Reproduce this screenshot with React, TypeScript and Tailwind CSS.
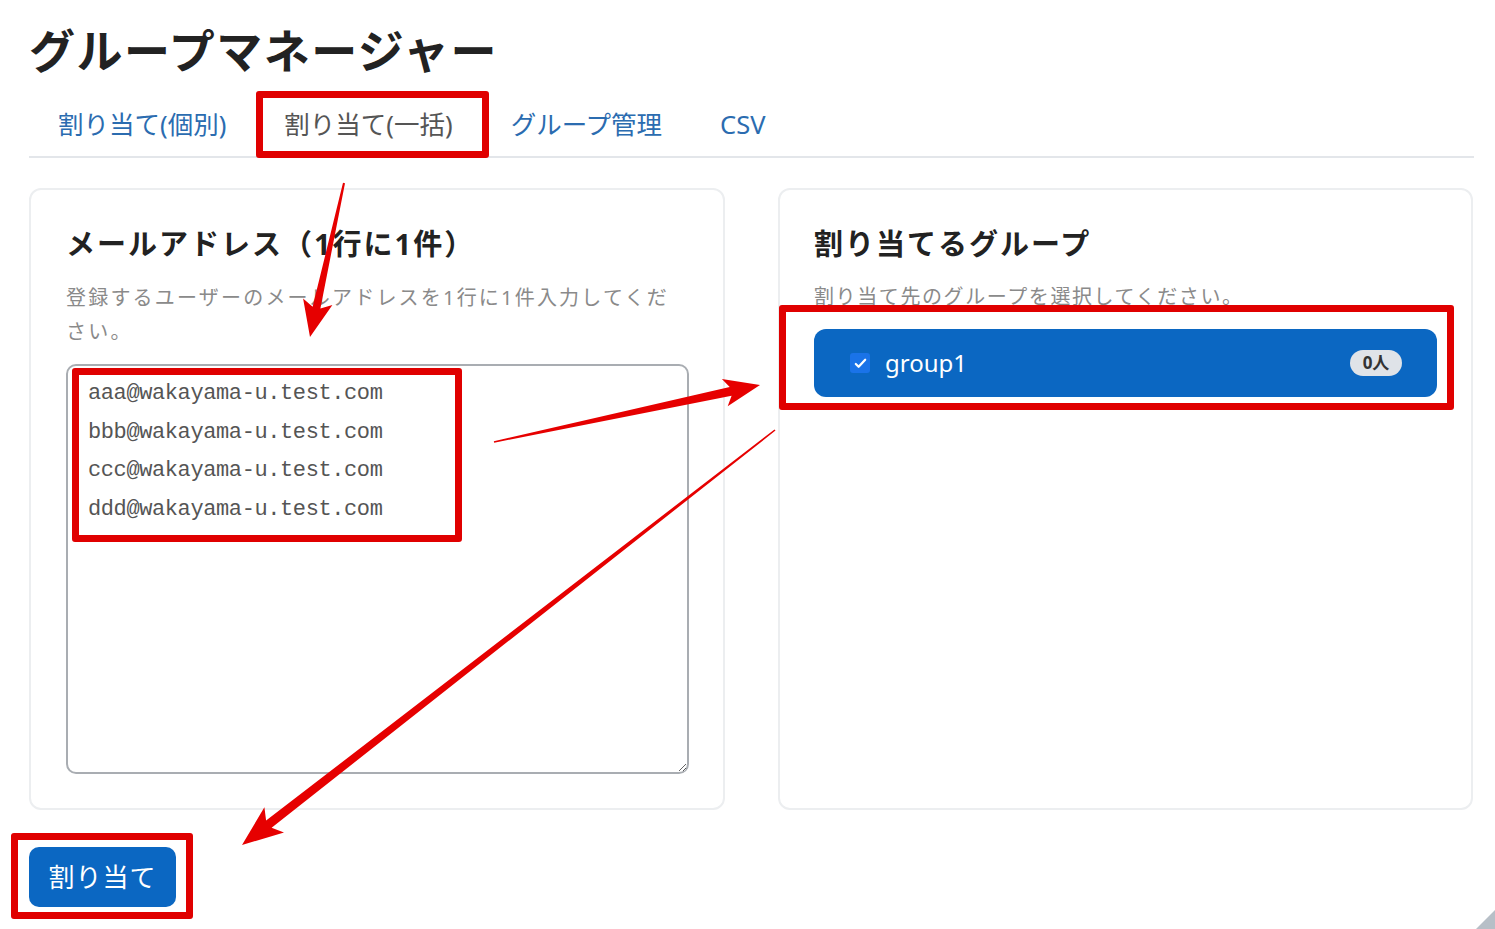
import React from "react"

type Pt = [number, number]

// tapered callout arrow: thin tail, thick shaft end, swept-back head
function arrowPoints(s: Pt, t: Pt, w0: number, w1: number, hl: number, hw: number) {
  const dx = t[0] - s[0]
  const dy = t[1] - s[1]
  const len = Math.hypot(dx, dy)
  const d: Pt = [dx / len, dy / len]
  const n: Pt = [-d[1], d[0]]
  const b: Pt = [t[0] - d[0] * hl, t[1] - d[1] * hl]
  const barb: Pt = [t[0] - d[0] * hl * 1.2, t[1] - d[1] * hl * 1.2]
  const p = (base: Pt, k: number): string =>
    `${(base[0] + n[0] * k).toFixed(1)},${(base[1] + n[1] * k).toFixed(1)}`
  return [
    p(s, w0 / 2),
    p(b, w1 / 2),
    p(barb, hw),
    `${t[0]},${t[1]}`,
    p(barb, -hw),
    p(b, -w1 / 2),
    p(s, -w0 / 2),
  ].join(" ")
}

const emails = [
  "aaa@wakayama-u.test.com",
  "bbb@wakayama-u.test.com",
  "ccc@wakayama-u.test.com",
  "ddd@wakayama-u.test.com",
].join("\n")

const tabs = ["割り当て(個別)", "割り当て(一括)", "グループ管理", "CSV"]

export default function App() {
  return (
    <div
      className="relative h-[929px] w-[1495px] overflow-hidden bg-white"
      style={{ fontFamily: '"Noto Sans", "Noto Sans CJK JP", sans-serif' }}
    >
      <div className="pl-[29px] pr-[21px] pt-[20px]">
        <h1 className="text-[46px] font-bold leading-[60px] tracking-[1.5px] text-[#222]">
          グループマネージャー
        </h1>

        {/* tabs */}
        <div className="mt-[12px] flex border-b-2 border-[#e3e6ea]">
          {tabs.map((tab, i) => (
            <div
              key={tab}
              className={
                i === 1
                  ? "px-[29px] py-[13px] text-[25.5px] leading-[38px] text-[#555]"
                  : "px-[29px] py-[13px] text-[25.5px] leading-[38px] text-[#2b6cb0]"
              }
            >
              {tab}
            </div>
          ))}
        </div>

        <div className="mt-[30px] flex gap-[53px]">
          {/* email input card */}
          <div className="flex h-[622px] w-[696px] flex-col rounded-[12px] border-2 border-[#eceef0] pb-[34px] pl-[35px] pr-[34px] pt-[33px]">
            <h2 className="text-[29px] font-bold leading-[42px] tracking-[2px] text-[#222]">
              メールアドレス（1行に1件）
            </h2>
            <p className="mt-[16px] text-[20px] leading-[34px] tracking-[2.2px] text-[#8a8a8a]">
              登録するユーザーのメールアドレスを1行に1件入力してください。
            </p>
            <textarea
              defaultValue={emails}
              className="mt-[15px] flex-1 resize rounded-[10px] border-2 border-[#a9adb2] pl-[20px] pt-[9px] text-[22px] leading-[38.5px] tracking-[-0.4px] text-[#555] outline-none"
              style={{ fontFamily: '"Liberation Mono", "Noto Sans CJK JP", monospace' }}
            />
          </div>

          {/* group select card */}
          <div className="h-[622px] w-[695px] rounded-[12px] border-2 border-[#eceef0] pl-[34px] pr-[34px] pt-[33px]">
            <h2 className="text-[29px] font-bold leading-[42px] tracking-[2px] text-[#222]">
              割り当てるグループ
            </h2>
            <p className="mt-[15px] text-[20px] leading-[34px] tracking-[1.6px] text-[#8a8a8a]">
              割り当て先のグループを選択してください。
            </p>
            <div className="mt-[15px] flex h-[68px] items-center rounded-[12px] bg-[#0b67c2] pl-[36px] pr-[35px]">
              <span className="flex h-[20px] w-[20px] items-center justify-center rounded-[3px] bg-[#1a73e8]">
                <svg viewBox="0 0 16 16" className="h-[15px] w-[15px]">
                  <path d="M3 8.5l3 3 7-7.5" fill="none" stroke="#fff" strokeWidth="2.4" strokeLinecap="round" strokeLinejoin="round" />
                </svg>
              </span>
              <span className="ml-[15px] text-[24px] leading-none text-white">group1</span>
              <span className="ml-auto flex h-[26px] w-[52px] items-center justify-center rounded-full bg-[#dfe3e8] text-[17px] font-bold text-[#333]">
                0人
              </span>
            </div>
          </div>
        </div>

        <button className="mt-[37px] flex h-[60px] w-[147px] items-center justify-center rounded-[10px] bg-[#0b67c2] text-[26px] tracking-[1px] text-white">
          割り当て
        </button>
      </div>

      {/* red highlight boxes */}
      <div className="absolute left-[256px] top-[91px] h-[67px] w-[233px] rounded-[3px] border-[7px] border-[#e00000]" />
      <div className="absolute left-[72px] top-[368px] h-[174px] w-[390px] rounded-[3px] border-[7px] border-[#e00000]" />
      <div className="absolute left-[779px] top-[305px] h-[105px] w-[675px] rounded-[3px] border-[7px] border-[#e00000]" />
      <div className="absolute left-[11px] top-[833px] h-[86px] w-[182px] rounded-[3px] border-[7px] border-[#e00000]" />

      {/* arrows */}
      <svg className="pointer-events-none absolute left-0 top-0" width="1495" height="929">
        <polygon points={arrowPoints([344, 183], [310, 337], 2, 8, 30, 15)} fill="#e60000" />
        <polygon points={arrowPoints([494, 442], [760, 385], 1.5, 9, 30, 14)} fill="#e60000" />
        <polygon points={arrowPoints([775, 430], [242, 845], 1.5, 9, 34, 16)} fill="#e60000" />
        <polygon points="1495,910 1495,929 1476,929" fill="#b7bfc7" />
      </svg>
    </div>
  )
}
